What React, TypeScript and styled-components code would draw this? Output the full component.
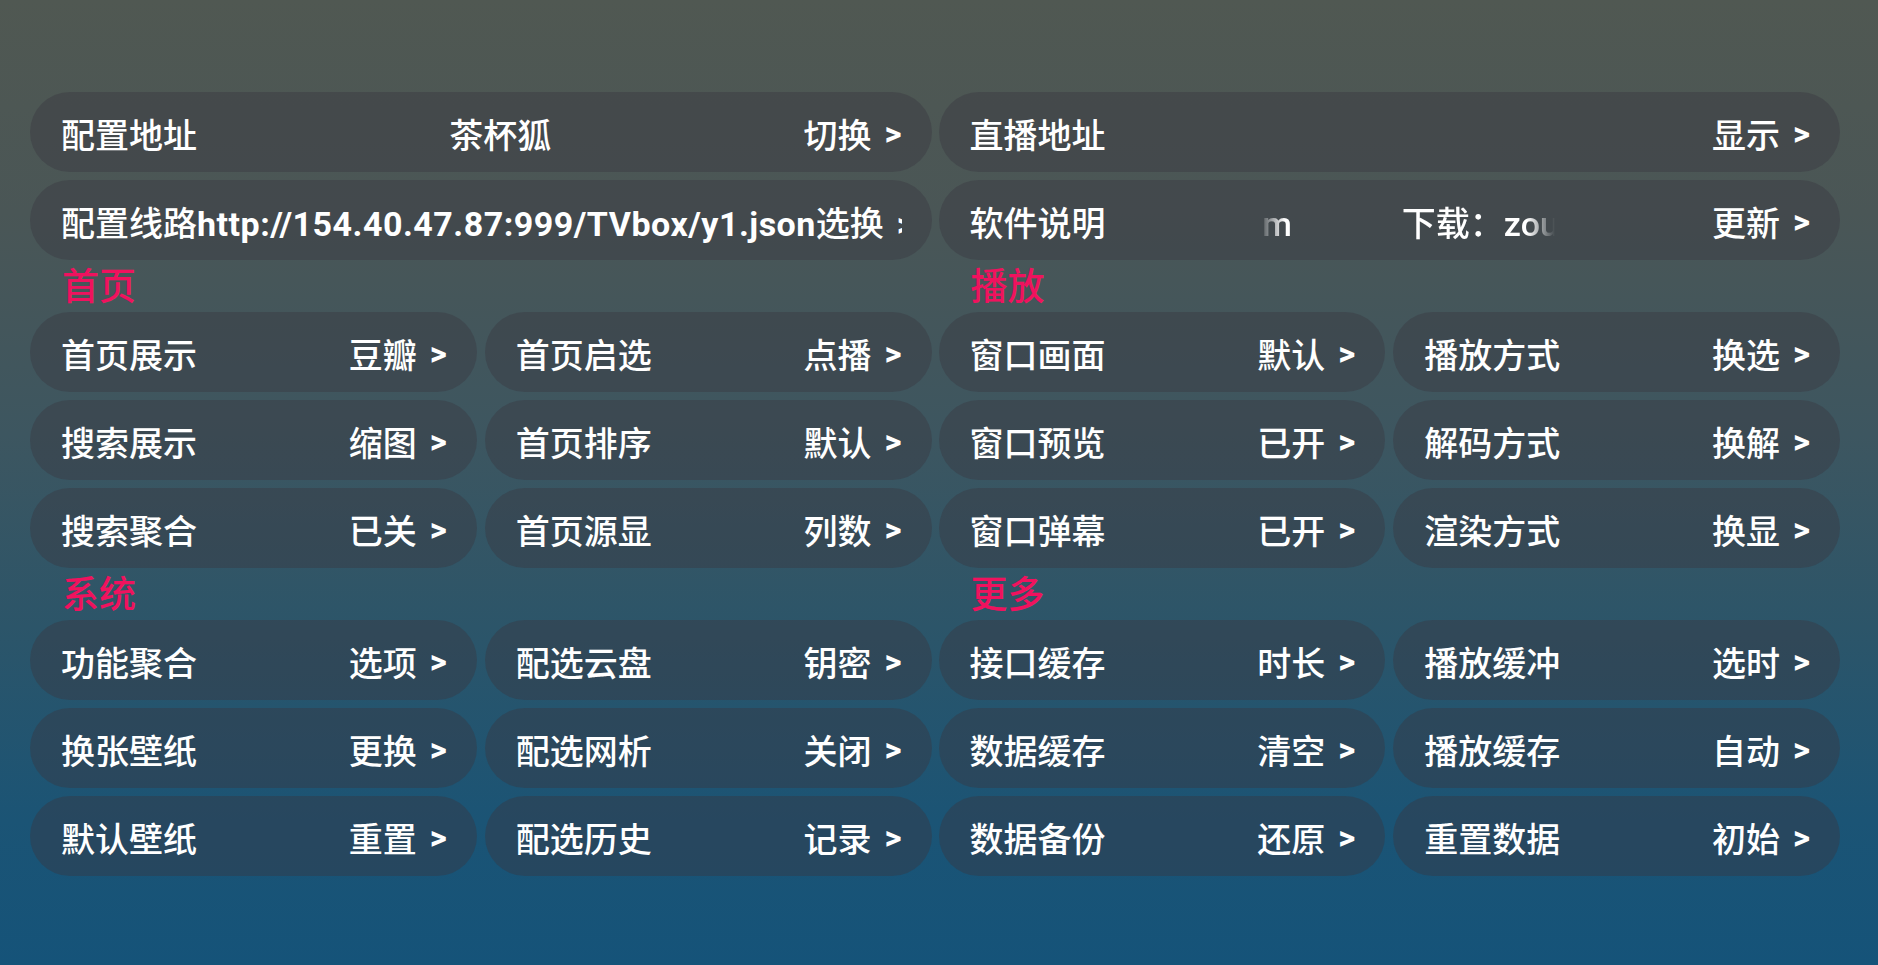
import React from 'react'
import styled, { createGlobalStyle } from 'styled-components'

interface ITile {
  label: string
  value: string
}

interface ISection {
  title: string
  tiles: ITile[]
}

const leftSections: ISection[] = [
  {
    title: '首页',
    tiles: [
      { label: '首页展示', value: '豆瓣' },
      { label: '首页启选', value: '点播' },
      { label: '搜索展示', value: '缩图' },
      { label: '首页排序', value: '默认' },
      { label: '搜索聚合', value: '已关' },
      { label: '首页源显', value: '列数' },
    ],
  },
  {
    title: '系统',
    tiles: [
      { label: '功能聚合', value: '选项' },
      { label: '配选云盘', value: '钥密' },
      { label: '换张壁纸', value: '更换' },
      { label: '配选网析', value: '关闭' },
      { label: '默认壁纸', value: '重置' },
      { label: '配选历史', value: '记录' },
    ],
  },
]

const rightSections: ISection[] = [
  {
    title: '播放',
    tiles: [
      { label: '窗口画面', value: '默认' },
      { label: '播放方式', value: '换选' },
      { label: '窗口预览', value: '已开' },
      { label: '解码方式', value: '换解' },
      { label: '窗口弹幕', value: '已开' },
      { label: '渲染方式', value: '换显' },
    ],
  },
  {
    title: '更多',
    tiles: [
      { label: '接口缓存', value: '时长' },
      { label: '播放缓冲', value: '选时' },
      { label: '数据缓存', value: '清空' },
      { label: '播放缓存', value: '自动' },
      { label: '数据备份', value: '还原' },
      { label: '重置数据', value: '初始' },
    ],
  },
]

function Value({ text }: { text: string }) {
  return (
    <ValueText>
      {text}
      <Arrow>&gt;</Arrow>
    </ValueText>
  )
}

function Section({ title, tiles }: ISection) {
  return (
    <>
      <SectionTitle>{title}</SectionTitle>
      <TileGrid>
        {tiles.map((tile) => (
          <Card key={tile.label}>
            <Label>{tile.label}</Label>
            <Middle />
            <Value text={tile.value} />
          </Card>
        ))}
      </TileGrid>
    </>
  )
}

function App() {
  return (
    <>
      <GlobalStyle />
      <Page>
        <Column>
          <Card>
            <Label>配置地址</Label>
            <Middle>茶杯狐</Middle>
            <Value text='切换' />
          </Card>
          <Card>
            {/* long source url, clipped by the card like the app does */}
            <Clipped>
              配置线路<Url>http://154.40.47.87:999/TVbox/y1.json</Url>选换<Arrow>&gt;</Arrow>
            </Clipped>
          </Card>
          {leftSections.map((s) => (
            <Section key={s.title} {...s} />
          ))}
        </Column>
        <Column>
          <Card>
            <Label>直播地址</Label>
            <Middle />
            <Value text='显示' />
          </Card>
          <Card>
            <Label>软件说明</Label>
            <Middle>
              <Marquee>
                <span>m</span>
                <MarqueeGap />
                <span>下载：zoutv</span>
              </Marquee>
            </Middle>
            <Value text='更新' />
          </Card>
          {rightSections.map((s) => (
            <Section key={s.title} {...s} />
          ))}
        </Column>
      </Page>
    </>
  )
}

export default App

const GlobalStyle = createGlobalStyle`
  html, body {
    margin: 0;
    padding: 0;
    height: 100%;
    overflow: hidden;
  }

  body {
    font-family: Roboto, "Noto Sans CJK SC", sans-serif;
  }
`

const Page = styled.div`
  align-content: start;
  background: linear-gradient(
    180deg,
    #505852 0%,
    #4a5656 22%,
    #3d5660 45%,
    #2c5569 65%,
    #1b5475 85%,
    #155379 100%
  );
  box-sizing: border-box;
  column-gap: 7px;
  display: grid;
  grid-template-columns: 1fr 1fr;
  height: 100vh;
  padding: 92px 38px 0 30px;
  width: 100vw;
`

const Column = styled.div`
  display: flex;
  flex-direction: column;
  gap: 8px;
  min-width: 0;
`

const TileGrid = styled.div`
  display: grid;
  gap: 8px;
  grid-template-columns: 1fr 1fr;
`

const Card = styled.div`
  align-items: center;
  background-color: rgba(58, 56, 64, 0.42);
  border-radius: 40px;
  box-sizing: border-box;
  color: #ffffff;
  display: flex;
  font-size: 34px;
  font-weight: 500;
  height: 80px;
  min-width: 0;
  padding: 0 30px 0 31px;
  white-space: nowrap;
`

const Label = styled.span`
  flex-shrink: 0;
  padding-top: 2px;
`

const Middle = styled.div`
  display: flex;
  flex: 1;
  justify-content: center;
  min-width: 0;
  padding-top: 2px;
`

const ValueText = styled.span`
  align-items: center;
  display: flex;
  flex-shrink: 0;
  padding-top: 2px;
`

const Arrow = styled.span`
  font-family: Roboto, sans-serif;
  font-size: 33px;
  font-weight: 700;
  margin-left: 13px;
`

const Clipped = styled.div`
  overflow: hidden;
  padding-top: 2px;
  width: 100%;
`

const Url = styled.span`
  font-weight: 700;
  letter-spacing: 0.5px;
`

const Marquee = styled.div`
  align-items: baseline;
  display: flex;
  -webkit-mask-image: linear-gradient(90deg, transparent 0, #000 26px, #000 268px, transparent 296px);
  mask-image: linear-gradient(90deg, transparent 0, #000 26px, #000 268px, transparent 296px);
  overflow: hidden;
  padding-left: 3px;
  width: 296px;

  & > span {
    flex-shrink: 0;
  }
`

const MarqueeGap = styled.span`
  width: 110px;
`

const SectionTitle = styled.div`
  color: #f0125e;
  font-size: 37px;
  font-weight: 500;
  height: 36px;
  line-height: 40px;
  padding-left: 32px;
`
